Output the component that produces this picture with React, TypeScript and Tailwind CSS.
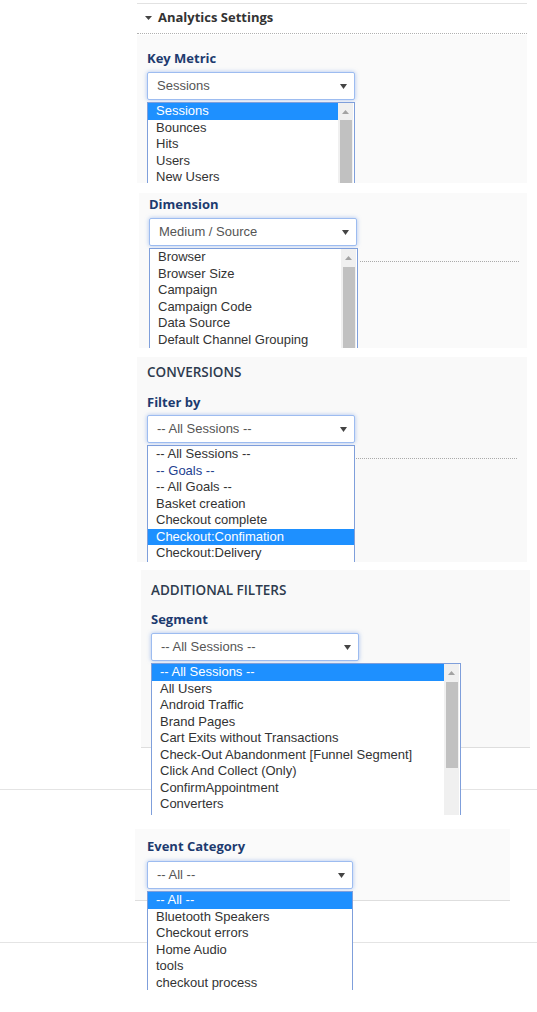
import React from 'react';

type Opt = { label: string; selected?: boolean; group?: boolean };

const sans = "font-['Liberation_Sans',Arial,sans-serif]";
const open = "font-['Open_Sans',sans-serif]";

const Caret = () => (
  <svg width="7" height="5" viewBox="0 0 7 5" className="absolute right-[7px] top-[11px]">
    <path d="M0 0h7L3.5 5z" fill="#444" />
  </svg>
);

function Select({ value, className }: { value: string; className: string }) {
  return (
    <div
      className={`relative h-[28px] rounded-[2px] border border-[#9dbcf0] bg-white pl-[9px] leading-[26px] text-[13px] text-[#555] shadow-[0_0_4px_rgba(102,150,230,0.55)] ${sans} ${className}`}
    >
      {value}
      <Caret />
    </div>
  );
}

function Scroll({ arrow, thumb }: { arrow: string; thumb: string }) {
  return (
    <div className="absolute right-[1px] top-0 bottom-0 w-[15px] bg-[#f0f0f0]">
      <div className={`flex items-center justify-center ${arrow}`}>
        <svg width="7" height="4" viewBox="0 0 7 4">
          <path d="M3.5 0L7 4H0z" fill="#a3a3a3" />
        </svg>
      </div>
      <div className={`ml-[2px] mr-[1px] bg-[#c1c1c1] ${thumb}`} />
    </div>
  );
}

function ListBox({ items, className, scroll }: { items: Opt[]; className: string; scroll?: React.ReactNode }) {
  return (
    <div className={`overflow-hidden border-x border-t border-[#7f9fdb] bg-white text-[13px] text-[#333] ${sans} ${className}`}>
      <div className={scroll ? 'mr-[16px]' : ''}>
        {items.map((o) => (
          <div
            key={o.label}
            className={`h-[16.5px] whitespace-nowrap pl-2 leading-[16.5px] ${
              o.selected ? 'bg-[#1e90ff] text-white' : o.group ? 'text-[#23418f]' : ''
            }`}
          >
            {o.label}
          </div>
        ))}
      </div>
      {scroll}
    </div>
  );
}

const Label = ({ children, className = '' }: { children: React.ReactNode; className?: string }) => (
  <div className={`h-[18px] text-[13px] font-bold leading-[18px] text-[#1d3b6f] ${open} ${className}`}>{children}</div>
);

const Heading = ({ children }: { children: React.ReactNode }) => (
  <div className={`h-[18px] text-[13.5px] font-semibold uppercase leading-[18px] text-[#2e3b4e] ${open}`}>{children}</div>
);

export default function App() {
  return (
    <div className="relative min-h-[1012px] w-[537px] overflow-hidden bg-white">
      {/* section header */}
      <div className="ml-[137px] mt-[3px] w-[390px] border-t border-[#e2e2e2]">
        <div className="flex h-[30px] items-center gap-[6px] border-b border-dotted border-[#b0b0b0] pb-[1px] pl-[8px]">
          <svg width="7" height="4" viewBox="0 0 7 4">
            <path d="M0 0h7L3.5 4z" fill="#444" />
          </svg>
          <span className={`text-[13px] font-bold text-[#333] ${open}`}>Analytics Settings</span>
        </div>
      </div>

      {/* key metric */}
      <div className="ml-[137px] mt-[1px] h-[148px] w-[390px] overflow-hidden bg-[#fafafa] pl-[10px] pt-[14px]">
        <Label>Key Metric</Label>
        <Select value="Sessions" className="mt-[5px] w-[208px]" />
        <ListBox
          className="relative mt-[2px] h-[100px] w-[208px]"
          items={[{ label: 'Sessions', selected: true }, { label: 'Bounces' }, { label: 'Hits' }, { label: 'Users' }, { label: 'New Users' }]}
          scroll={<Scroll arrow="h-[17px]" thumb="h-[120px]" />}
        />
      </div>

      {/* dimension */}
      <div className="relative ml-[139px] mt-[10px] h-[155px] w-[388px] overflow-hidden bg-[#fafafa] pl-[10px] pt-[2px]">
        <Label>Dimension</Label>
        <Select value="Medium / Source" className="mt-[5px] w-[208px]" />
        <ListBox
          className="relative mt-[2px] h-[110px] w-[209px]"
          items={[
            { label: 'Browser' },
            { label: 'Browser Size' },
            { label: 'Campaign' },
            { label: 'Campaign Code' },
            { label: 'Data Source' },
            { label: 'Default Channel Grouping' },
          ]}
          scroll={<Scroll arrow="h-[18px]" thumb="h-[120px]" />}
        />
        <div className="absolute left-[221px] top-[68px] w-[159px] border-t border-dotted border-[#aaa]" />
      </div>

      {/* conversions */}
      <div className="relative ml-[137px] mt-[9px] h-[205px] w-[390px] overflow-hidden bg-[#f9f9f9] pl-[10px] pt-[6px]">
        <Heading>Conversions</Heading>
        <Label className="mt-[12px]">Filter by</Label>
        <Select value="-- All Sessions --" className="mt-[4px] w-[208px]" />
        <ListBox
          className="mt-[2px] h-[130px] w-[208px]"
          items={[
            { label: '-- All Sessions --' },
            { label: '-- Goals --', group: true },
            { label: '-- All Goals --' },
            { label: 'Basket creation' },
            { label: 'Checkout complete' },
            { label: 'Checkout:Confimation', selected: true },
            { label: 'Checkout:Delivery' },
          ]}
        />
        <div className="absolute left-[219px] top-[101px] w-[161px] border-t border-dotted border-[#aaa]" />
      </div>

      {/* additional filters */}
      <div className="ml-[141px] mt-[8px] h-[178px] w-[389px] border-b border-[#dedede] bg-[#f9f9f9] pl-[10px] pt-[11px]">
        <Heading>Additional Filters</Heading>
        <Label className="mt-[11px]">Segment</Label>
        <div className="relative mt-[5px]">
          <Select value="-- All Sessions --" className="w-[208px]" />
          <ListBox
            className="absolute left-0 top-[30px] z-10 h-[152px] w-[310px]"
            items={[
              { label: '-- All Sessions --', selected: true },
              { label: 'All Users' },
              { label: 'Android Traffic' },
              { label: 'Brand Pages' },
              { label: 'Cart Exits without Transactions' },
              { label: 'Check-Out Abandonment [Funnel Segment]' },
              { label: 'Click And Collect (Only)' },
              { label: 'ConfirmAppointment' },
              { label: 'Converters' },
            ]}
            scroll={<Scroll arrow="h-[18px]" thumb="h-[86px]" />}
          />
        </div>
      </div>

      <div className="mt-[41px] h-px w-full bg-[#e4e4e4]" />

      {/* event category */}
      <div className="ml-[135px] mt-[39px] h-[72px] w-[375px] border-b border-[#dedede] bg-[#fafafa] pl-[12px] pt-[8px]">
        <Label>Event Category</Label>
        <div className="relative mt-[6px]">
          <Select value="-- All --" className="w-[206px]" />
          <ListBox
            className="absolute left-0 top-[30px] z-10 h-[99px] w-[206px]"
            items={[
              { label: '-- All --', selected: true },
              { label: 'Bluetooth Speakers' },
              { label: 'Checkout errors' },
              { label: 'Home Audio' },
              { label: 'tools' },
              { label: 'checkout process' },
            ]}
          />
        </div>
      </div>

      <div className="mt-[41px] h-px w-full bg-[#e4e4e4]" />
    </div>
  );
}
